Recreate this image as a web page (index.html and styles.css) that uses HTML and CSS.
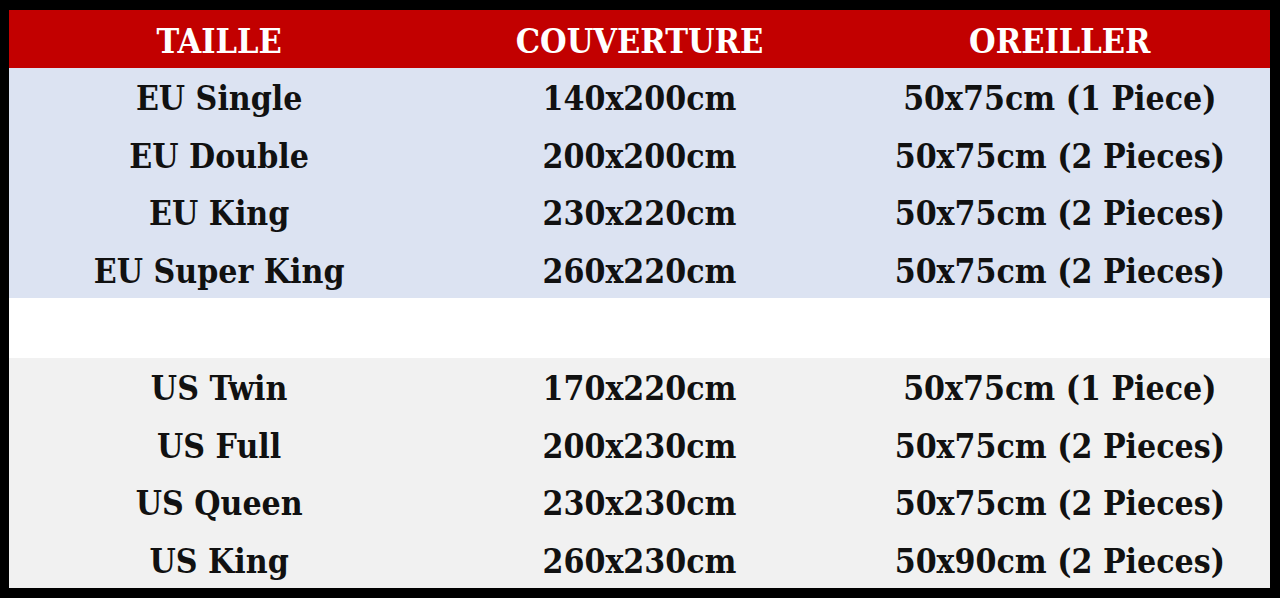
FILE: index.html
```html
<!DOCTYPE html>
<html lang="fr">
<head>
<meta charset="utf-8">
<title>Tailles</title>
<link rel="stylesheet" href="styles.css">
</head>
<body>
<div class="frame">
  <div class="row head">
    <div class="cell">TAILLE</div>
    <div class="cell">COUVERTURE</div>
    <div class="cell">OREILLER</div>
  </div>
  <div class="group eu">
    <div class="row"><div class="cell">EU Single</div><div class="cell">140x200cm</div><div class="cell">50x75cm (1 Piece)</div></div>
    <div class="row"><div class="cell">EU Double</div><div class="cell">200x200cm</div><div class="cell">50x75cm (2 Pieces)</div></div>
    <div class="row"><div class="cell">EU King</div><div class="cell">230x220cm</div><div class="cell">50x75cm (2 Pieces)</div></div>
    <div class="row"><div class="cell">EU Super King</div><div class="cell">260x220cm</div><div class="cell">50x75cm (2 Pieces)</div></div>
  </div>
  <div class="spacer"></div>
  <div class="group us">
    <div class="row"><div class="cell">US Twin</div><div class="cell">170x220cm</div><div class="cell">50x75cm (1 Piece)</div></div>
    <div class="row"><div class="cell">US Full</div><div class="cell">200x230cm</div><div class="cell">50x75cm (2 Pieces)</div></div>
    <div class="row"><div class="cell">US Queen</div><div class="cell">230x230cm</div><div class="cell">50x75cm (2 Pieces)</div></div>
    <div class="row"><div class="cell">US King</div><div class="cell">260x230cm</div><div class="cell">50x90cm (2 Pieces)</div></div>
  </div>
</div>
</body>
</html>
```
FILE: styles.css
```css
html, body {
  margin: 0;
  padding: 0;
  background: #000;
}
body {
  width: 1280px;
  height: 598px;
  overflow: hidden;
}
.frame {
  margin: 10px 10px 0 9px;
  height: 578px;
  display: flex;
  flex-direction: column;
  background: #fff;
  font-family: "DejaVu Serif Condensed", "DejaVu Serif", "Liberation Serif", serif;
  font-stretch: condensed;
  font-weight: bold;
  color: #111;
}
.row {
  display: grid;
  grid-template-columns: 1fr 1fr 1fr;
  align-items: center;
  height: 57.5px;
}
.cell {
  text-align: center;
  font-size: 33.5px;
  line-height: 1;
  white-space: nowrap;
  padding-top: 4px;
}
.head {
  background: #c20000;
  color: #fff;
  height: 58px;
}
.head .cell {
  font-size: 34px;
  padding-top: 3px;
}
.eu {
  background: #dce3f2;
}
.spacer {
  height: 60px;
  background: #fff;
}
.us {
  background: #f1f1f1;
}
```
